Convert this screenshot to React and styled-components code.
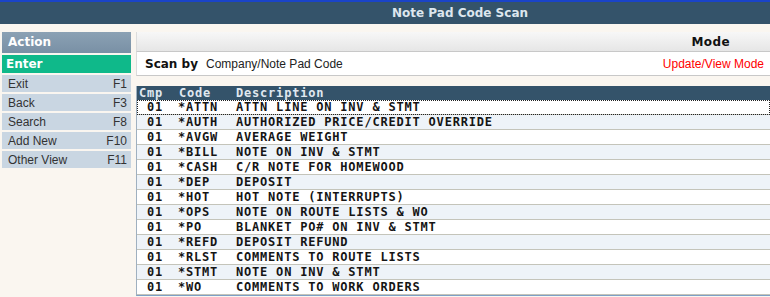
import React from "react";
import styled, { createGlobalStyle } from "styled-components";

const actions = [
  { label: "Exit", key: "F1" },
  { label: "Back", key: "F3" },
  { label: "Search", key: "F8" },
  { label: "Add New", key: "F10" },
  { label: "Other View", key: "F11" },
];

const notes = [
  ["01", "*ATTN", "ATTN LINE ON INV & STMT"],
  ["01", "*AUTH", "AUTHORIZED PRICE/CREDIT OVERRIDE"],
  ["01", "*AVGW", "AVERAGE WEIGHT"],
  ["01", "*BILL", "NOTE ON INV & STMT"],
  ["01", "*CASH", "C/R NOTE FOR HOMEWOOD"],
  ["01", "*DEP", "DEPOSIT"],
  ["01", "*HOT", "HOT NOTE (INTERRUPTS)"],
  ["01", "*OPS", "NOTE ON ROUTE LISTS & WO"],
  ["01", "*PO", "BLANKET PO# ON INV & STMT"],
  ["01", "*REFD", "DEPOSIT REFUND"],
  ["01", "*RLST", "COMMENTS TO ROUTE LISTS"],
  ["01", "*STMT", "NOTE ON INV & STMT"],
  ["01", "*WO", "COMMENTS TO WORK ORDERS"],
];

export default function App() {
  return (
    <>
      <GlobalStyle />
      <Page>
        <TitleBar>
          <Title>Note Pad Code Scan</Title>
        </TitleBar>
        <Body>
          <Sidebar>
            <SideHeader>Action</SideHeader>
            <EnterItem>Enter</EnterItem>
            {actions.map((a) => (
              <SideItem key={a.label}>
                <span>{a.label}</span>
                <span>{a.key}</span>
              </SideItem>
            ))}
          </Sidebar>
          <Main>
            <ModeHeader>Mode</ModeHeader>
            <ScanRow>
              <ScanLabel>Scan by</ScanLabel>
              <ScanValue>Company/Note Pad Code</ScanValue>
              <ModeText>Update/View Mode</ModeText>
            </ScanRow>
            <Table>
              <HeadRow>
                <HeadCell>Cmp</HeadCell>
                <HeadCell>Code</HeadCell>
                <HeadCell>Description</HeadCell>
              </HeadRow>
              {notes.map(([cmp, code, desc], i) => (
                <Row key={code} $alt={i % 2 === 1} $focus={i === 0}>
                  <CmpCell>{cmp}</CmpCell>
                  <CodeCell>{code}</CodeCell>
                  <DescCell>{desc}</DescCell>
                </Row>
              ))}
            </Table>
          </Main>
        </Body>
      </Page>
    </>
  );
}

const GlobalStyle = createGlobalStyle`
  html, body {
    margin: 0;
    padding: 0;
    background: #faf6f0;
  }
`;

const Page = styled.div`
  width: 770px;
  height: 297px;
  overflow: hidden;
  background: #faf6f0;
  font-family: "Liberation Sans", Arial, sans-serif;
`;

const TitleBar = styled.div`
  height: 22px;
  border-top: 2px solid #1a44c8;
  background: #34536a;
  display: flex;
  align-items: center;
  justify-content: center;
  padding-left: 150px;
`;

const Title = styled.div`
  color: #dde6ee;
  font-family: "DejaVu Sans", Verdana, sans-serif;
  font-weight: bold;
  font-size: 12px;
`;

const Body = styled.div`
  display: flex;
  align-items: flex-start;
  gap: 5px;
  padding: 8px 0 0 2px;
`;

const Sidebar = styled.div`
  width: 129px;
  display: flex;
  flex-direction: column;
  gap: 2px;
`;

const SideHeader = styled.div`
  height: 21px;
  line-height: 21px;
  padding-left: 6px;
  background: linear-gradient(#8ba1b4, #7990a5);
  color: #ffffff;
  font-family: "DejaVu Sans", Verdana, sans-serif;
  font-weight: bold;
  font-size: 12px;
`;

const EnterItem = styled.div`
  height: 18px;
  line-height: 18px;
  padding-left: 4px;
  background: #0fb98a;
  color: #ffffff;
  font-family: "DejaVu Sans", Verdana, sans-serif;
  font-weight: bold;
  font-size: 12px;
`;

const SideItem = styled.div`
  height: 17px;
  display: flex;
  align-items: center;
  justify-content: space-between;
  padding: 0 4px 0 6px;
  background: #c9d6e2;
  color: #333333;
  font-size: 12px;
`;

const Main = styled.div`
  flex: 1;
  display: flex;
  flex-direction: column;
`;

const ModeHeader = styled.div`
  height: 19px;
  line-height: 20px;
  text-align: right;
  padding-right: 40px;
  background: linear-gradient(#f7f7f7, #e6e6e6);
  border-left: 1px solid #dcdcdc;
  border-bottom: 1px solid #c8c8c8;
  color: #111111;
  font-family: "DejaVu Sans", Verdana, sans-serif;
  font-weight: bold;
  font-size: 12px;
  letter-spacing: 0.4px;
`;

const ScanRow = styled.div`
  height: 23px;
  display: flex;
  align-items: center;
  padding: 0 6px 0 8px;
  background: #ffffff;
  border-left: 1px solid #dcdcdc;
  border-bottom: 1px solid #c8c8c8;
`;

const ScanLabel = styled.span`
  width: 61px;
  color: #111111;
  font-family: "DejaVu Sans", Verdana, sans-serif;
  font-weight: bold;
  font-size: 12px;
`;

const ScanValue = styled.span`
  flex: 1;
  color: #222222;
  font-size: 12px;
`;

const ModeText = styled.span`
  color: #ff0000;
  font-size: 12px;
`;

const Table = styled.div`
  margin-top: 10px;
  border-left: 1px solid #9fb0c0;
  border-bottom: 1px solid #7e9fc6;
  font-family: "DejaVu Sans Mono", "Liberation Mono", monospace;
  font-weight: bold;
  font-size: 12px;
  letter-spacing: 0.8px;
`;

const HeadRow = styled.div`
  height: 14px;
  display: grid;
  grid-template-columns: 40px 57px 1fr;
  align-items: center;
  background: #34536a;
  color: #e0e8f0;
`;

const HeadCell = styled.div`
  padding-left: 2px;
  white-space: nowrap;
`;

const Row = styled.div`
  height: 14px;
  display: grid;
  grid-template-columns: 40px 57px 1fr;
  align-items: center;
  background: ${(p) => (p.$alt ? "#eef3f8" : "#ffffff")};
  border-bottom: 1px solid #c4c4ba;
  color: #151515;
  outline: ${(p) => (p.$focus ? "1px dotted #222222" : "none")};
  outline-offset: -1px;
`;

const CmpCell = styled.div`
  padding-left: 10px;
`;

const CodeCell = styled.div`
  padding-left: 1px;
`;

const DescCell = styled.div`
  padding-left: 2px;
  white-space: nowrap;
`;
